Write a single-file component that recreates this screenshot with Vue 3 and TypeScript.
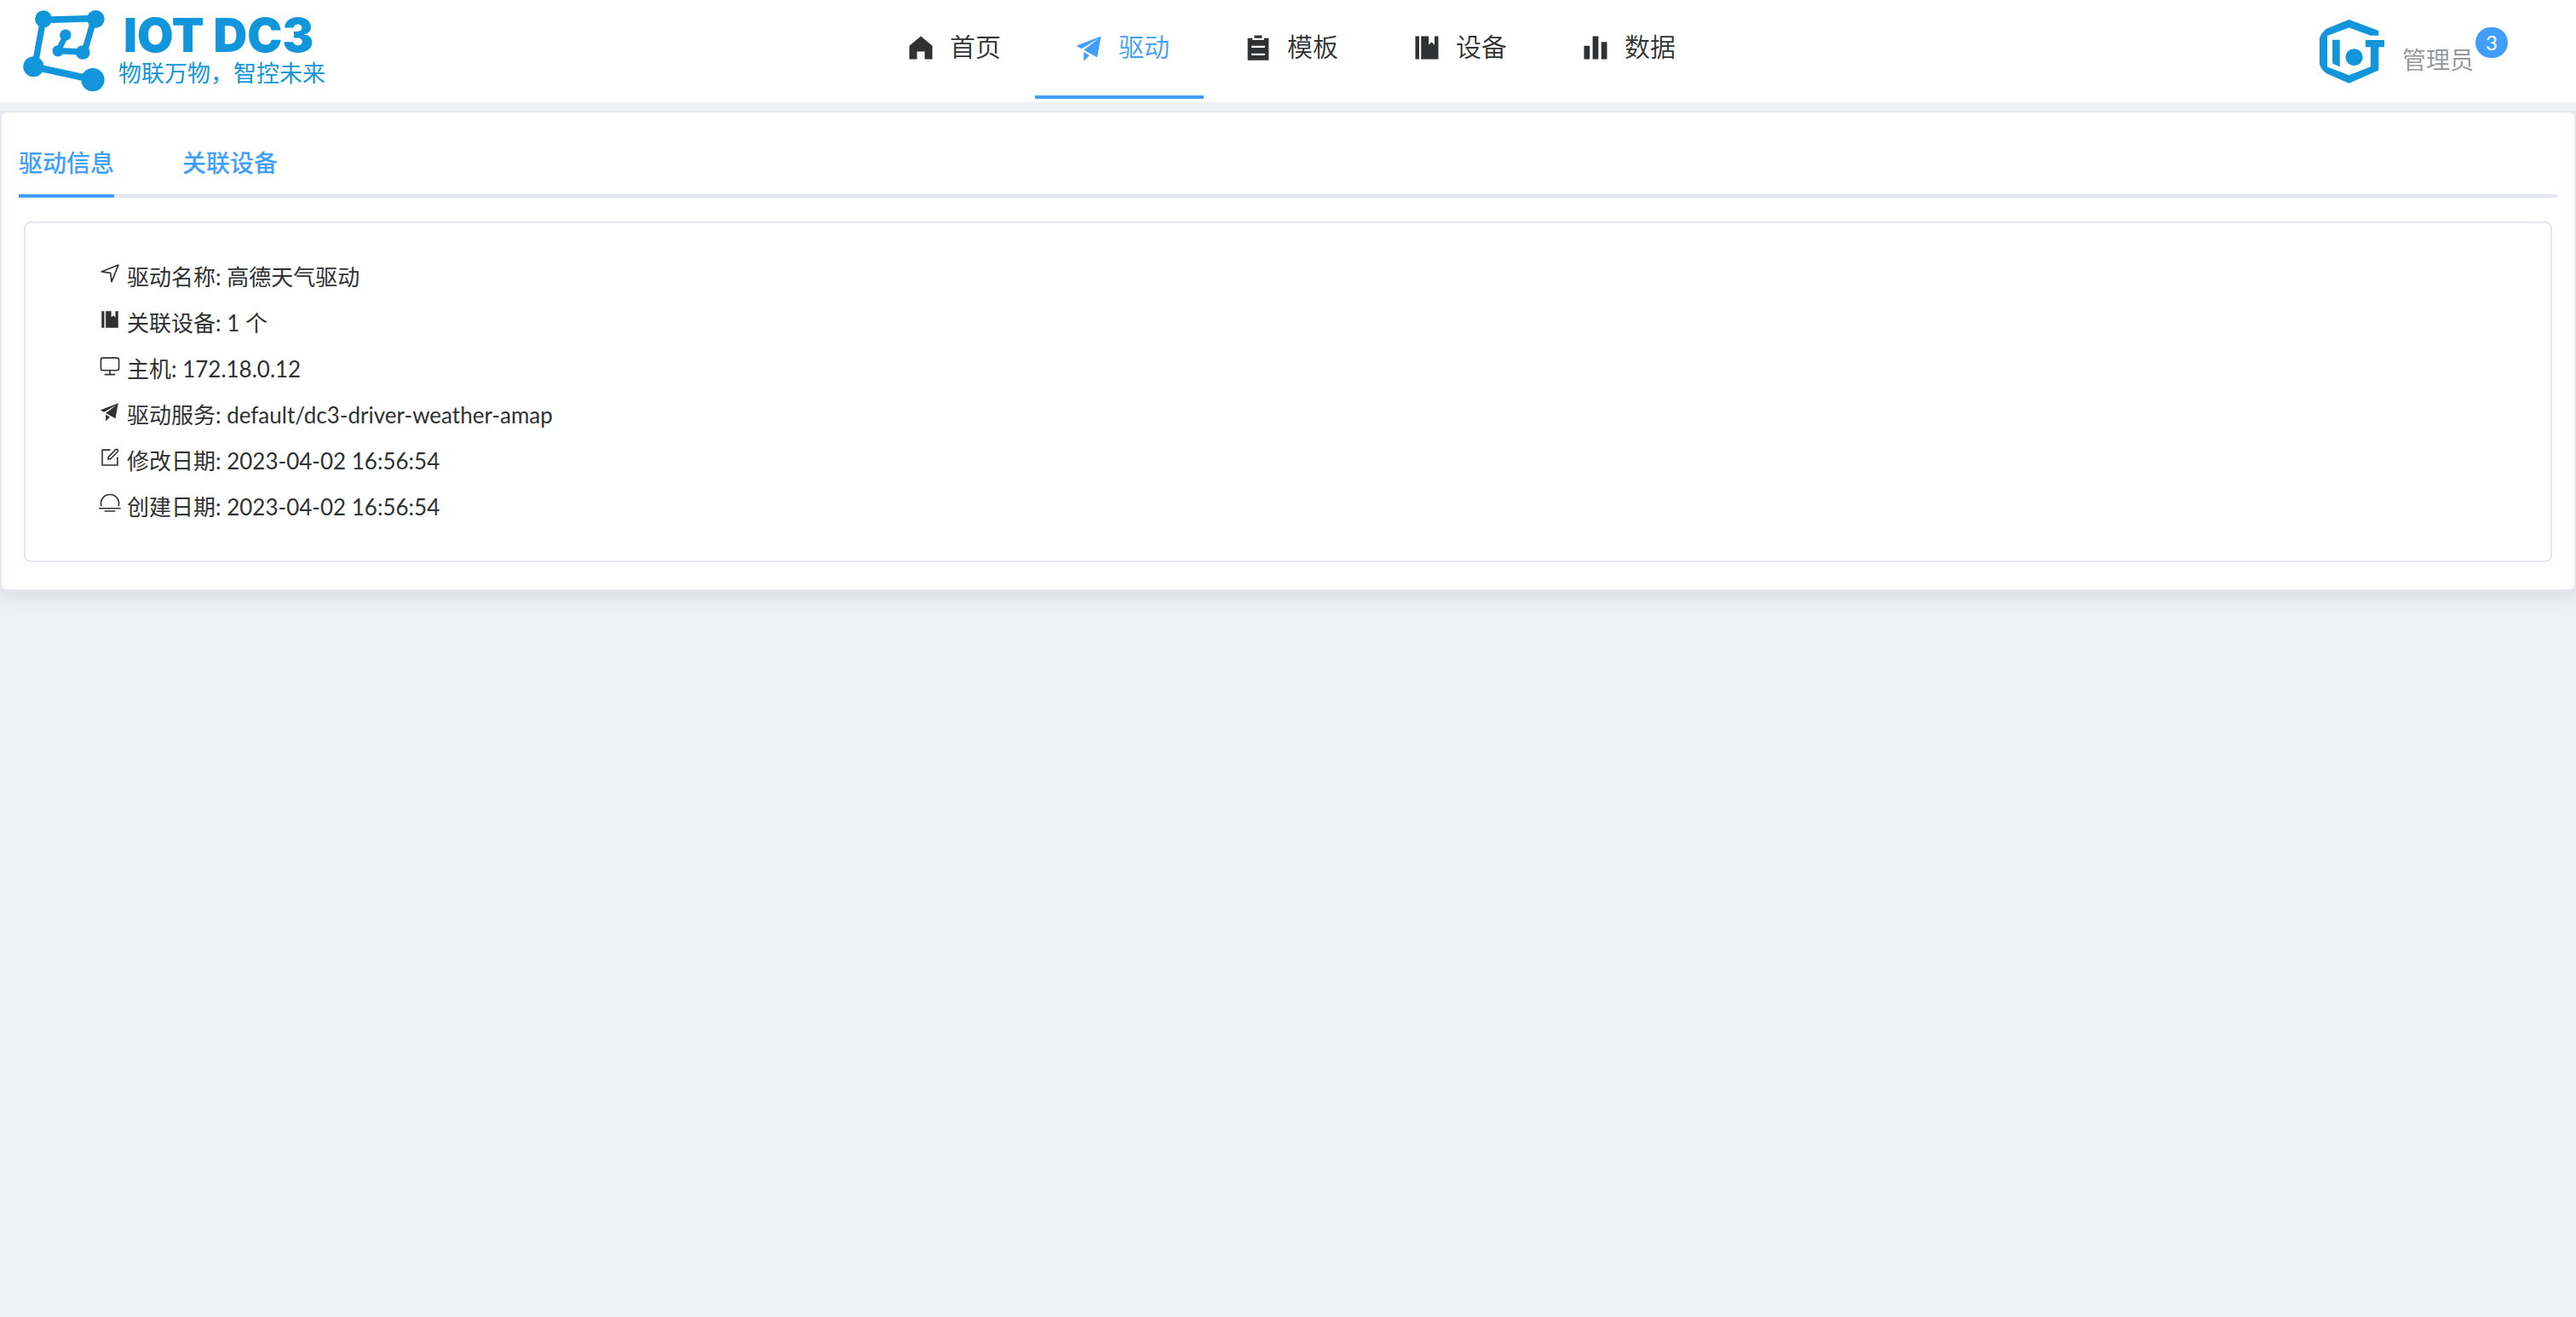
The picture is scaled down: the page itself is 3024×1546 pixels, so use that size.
<script setup lang="ts">
import { ref } from 'vue'

interface NavItem {
  label: string
  icon: string
}

interface InfoRow {
  label: string
  value: string
  icon: string
}

const icons: Record<string, string> = {
  home: 'M512 128 128 447.936V896h255.936V640H640v256h255.936V447.936z',
  promotion:
    'm64 448 832-320-128 704-446.08-243.328L832 192 242.816 545.536 64 448zm256 512V657.024L512 768 320 960z',
  list: 'M704 192h160v736H160V192h160v64h384v-64zM288 512h448v-64H288v64zm0 256h448v-64H288v64zm96-576V96h256v96H384z',
  management:
    'M576 128v288l96-96 96 96V128h128v768H320V128h256zm-448 0h128v768H128V128z',
  histogram:
    'M416 896V128h192v768H416zm-288 0V448h192v448H128zm576 0V320h192v576H704z',
  position:
    'm249.6 417.088 319.744 43.072 39.168 310.272L845.12 178.88 249.6 417.088zm-129.024 47.168a32 32 0 0 1-7.68-61.44l777.792-311.04a32 32 0 0 1 41.6 41.6l-310.08 775.68a32 32 0 0 1-61.44-7.808L512 516.992l-391.424-52.736z',
  monitor:
    'M544 768v128h192a32 32 0 1 1 0 64H288a32 32 0 1 1 0-64h192V768H192A128 128 0 0 1 64 640V256a128 128 0 0 1 128-128h640a128 128 0 0 1 128 128v384a128 128 0 0 1-128 128H544zM192 192a64 64 0 0 0-64 64v384a64 64 0 0 0 64 64h640a64 64 0 0 0 64-64V256a64 64 0 0 0-64-64H192z',
  edit: 'M832 512a32 32 0 1 1 64 0v352a32 32 0 0 1-32 32H160a32 32 0 0 1-32-32V160a32 32 0 0 1 32-32h352a32 32 0 0 1 0 64H192v640h640V512z M469.952 554.24l52.8-7.552L847.104 222.4a32 32 0 1 0-45.248-45.248L477.44 501.44l-7.552 52.8zm422.4-422.4a96 96 0 0 1 0 135.808l-331.84 331.84a32 32 0 0 1-18.112 9.088L436.8 623.68a32 32 0 0 1-36.224-36.224l15.104-105.6a32 32 0 0 1 9.024-18.112l331.904-331.84a96 96 0 0 1 135.744 0z',
  sunset:
    'M82.56 640a448 448 0 1 1 858.88 0h-67.2a384 384 0 1 0-724.288 0H82.56zM32 704h960q32 0 32 32t-32 32H32q-32 0-32-32t32-32zm256 128h448q32 0 32 32t-32 32H288q-32 0-32-32t32-32z',
}

const navItems: NavItem[] = [
  { label: '首页', icon: 'home' },
  { label: '驱动', icon: 'promotion' },
  { label: '模板', icon: 'list' },
  { label: '设备', icon: 'management' },
  { label: '数据', icon: 'histogram' },
]
const activeNav = ref('驱动')

const tabs: string[] = ['驱动信息', '关联设备']
const activeTab = ref('驱动信息')

const rows: InfoRow[] = [
  { label: '驱动名称', value: '高德天气驱动', icon: 'position' },
  { label: '关联设备', value: '1 个', icon: 'management' },
  { label: '主机', value: '172.18.0.12', icon: 'monitor' },
  { label: '驱动服务', value: 'default/dc3-driver-weather-amap', icon: 'promotion' },
  { label: '修改日期', value: '2023-04-02 16:56:54', icon: 'edit' },
  { label: '创建日期', value: '2023-04-02 16:56:54', icon: 'sunset' },
]
</script>

<template>
  <div class="page">
    <header class="header">
      <a class="logo" href="#">
        <svg class="logo-mark" viewBox="80 35 287 287" aria-hidden="true">
          <g fill="none" stroke="#1296db">
            <path d="M324 278 117 233" stroke-width="25" />
            <path d="M122 228 151 66" stroke-width="22" />
            <path d="M151 69 335 64" stroke-width="23" />
            <path d="M328 70 296 180" stroke-width="22" />
            <path d="M290 182 204 177" stroke-width="22" />
            <path d="M204 177 230 123" stroke-width="20" />
          </g>
          <g fill="#1296db">
            <circle cx="152" cy="66" r="30" />
            <circle cx="335" cy="66" r="31" />
            <circle cx="229" cy="122" r="20" />
            <circle cx="203" cy="178" r="20" />
            <circle cx="290" cy="183" r="25" />
            <circle cx="117" cy="233" r="36" />
            <circle cx="325" cy="279" r="41" />
          </g>
        </svg>
        <span class="logo-text">
          <span class="logo-name">IOT DC3</span>
          <span class="logo-slogan">物联万物，智控未来</span>
        </span>
      </a>

      <nav class="nav">
        <a
          v-for="item in navItems"
          :key="item.label"
          href="#"
          class="nav-item"
          :class="{ active: item.label === activeNav }"
          @click.prevent="activeNav = item.label"
        >
          <span class="nav-icon">
            <svg viewBox="0 0 1024 1024" aria-hidden="true"><path :d="icons[item.icon]" /></svg>
          </span>
          <span class="nav-label">{{ item.label }}</span>
        </a>
      </nav>

      <div class="user">
        <svg class="avatar" viewBox="129 69 227 224" fill="#1296db" aria-hidden="true">
          <path
            d="M232 69 336 108V125H308L232 97 156 126V235L232 264 308 234V165H290V141H356V165H336V247L232 292 153 258Q129 241 129 220V134Q134 116 153 101Z"
          />
          <path d="M174 140H200V235L174 223Z" />
          <circle cx="250" cy="201" r="30" />
        </svg>
        <button class="user-name" type="button">
          管理员
          <span class="badge">3</span>
        </button>
      </div>
    </header>

    <main class="main">
      <section class="card">
        <div class="tabs" role="tablist">
          <button
            v-for="tab in tabs"
            :key="tab"
            type="button"
            role="tab"
            class="tab"
            :class="{ active: tab === activeTab }"
            :aria-selected="tab === activeTab"
            @click="activeTab = tab"
          >
            {{ tab }}
          </button>
        </div>
        <div class="info-card">
          <ul class="info-list">
            <li v-for="row in rows" :key="row.label" class="info-row">
              <svg class="info-icon" viewBox="0 0 1024 1024" aria-hidden="true">
                <path :d="icons[row.icon]" />
              </svg>
              <span>{{ row.label }}: {{ row.value }}</span>
            </li>
          </ul>
        </div>
      </section>
    </main>
  </div>
</template>

<style>
body {
  margin: 0;
  background: #f0f1f5;
}
</style>

<style scoped>
.page {
  min-height: 100vh;
  background: #f0f1f5;
  color: #303133;
  font-family: Lato, 'Noto Sans CJK SC', sans-serif;
  font-size: 26px;
}

.header {
  display: grid;
  grid-template-columns: 1fr auto 1fr;
  height: 120px;
  background: #fff;
}

.logo {
  display: flex;
  align-items: flex-start;
  gap: 16px;
  padding: 12px 0 0 27px;
  color: #1296db;
  text-decoration: none;
}

.logo-mark {
  width: 96px;
  height: 96px;
}

.logo-text {
  display: flex;
  flex-direction: column;
}

.logo-name {
  padding-left: 6px;
  font-family: Inter, sans-serif;
  font-size: 55px;
  font-weight: 900;
  line-height: 58px;
}

.logo-slogan {
  font-size: 27px;
  line-height: 32px;
}

.nav {
  display: flex;
}

.nav-item {
  box-sizing: border-box;
  display: flex;
  align-items: center;
  gap: 10px;
  height: 116px;
  padding: 0 40px;
  border-bottom: 4px solid transparent;
  color: #303133;
  font-size: 30px;
  font-weight: 350;
  text-decoration: none;
}

.nav-item.active {
  border-bottom-color: #409eff;
  color: #409eff;
}

.nav-icon {
  display: flex;
  justify-content: center;
  width: 48px;
}

.nav-icon svg {
  width: 36px;
  height: 36px;
  fill: currentColor;
}

.nav-label {
  padding-bottom: 6px;
}

.user {
  display: flex;
  justify-content: flex-end;
  align-items: flex-start;
  gap: 21px;
  padding: 23px 120px 0 0;
}

.avatar {
  width: 76px;
  height: 75px;
}

.user-name {
  position: relative;
  padding: 27px 0 0;
  border: 0;
  background: none;
  color: #909399;
  font-family: inherit;
  font-size: 28px;
  font-weight: 350;
  line-height: 40px;
}

.badge {
  position: absolute;
  top: 9px;
  right: -40px;
  width: 38px;
  height: 36px;
  border-radius: 18px;
  background: #409eff;
  color: #fff;
  font-size: 24px;
  font-weight: 400;
  line-height: 36px;
  text-align: center;
}

.main {
  padding-bottom: 135px;
  overflow: hidden;
  border-top: 10px solid #edf1f4;
  background: #edf1f4;
}

.card {
  padding: 20px 20px 32px;
  border: 2px solid #e4e7ed;
  border-radius: 8px;
  background: #fff;
  box-shadow: 0 4px 24px rgba(0, 0, 0, 0.1);
}

.tabs {
  display: flex;
  gap: 80px;
  height: 80px;
  box-shadow: inset 0 -4px #e4e7ed;
}

.tab {
  padding: 0;
  border: 0;
  border-bottom: 4px solid transparent;
  background: none;
  color: #409eff;
  font-family: inherit;
  font-size: 28px;
  font-weight: 500;
}

.tab.active {
  border-bottom-color: #409eff;
}

.info-card {
  margin: 28px 6px 0;
  padding: 36px 86px;
  border: 2px solid #e4e7ed;
  border-radius: 8px;
}

.info-list {
  margin: 0;
  padding: 0;
  list-style: none;
}

.info-row {
  display: flex;
  gap: 7px;
  line-height: 54px;
}

.info-icon {
  width: 26px;
  height: 26px;
  margin-top: 10px;
  fill: currentColor;
}
</style>
